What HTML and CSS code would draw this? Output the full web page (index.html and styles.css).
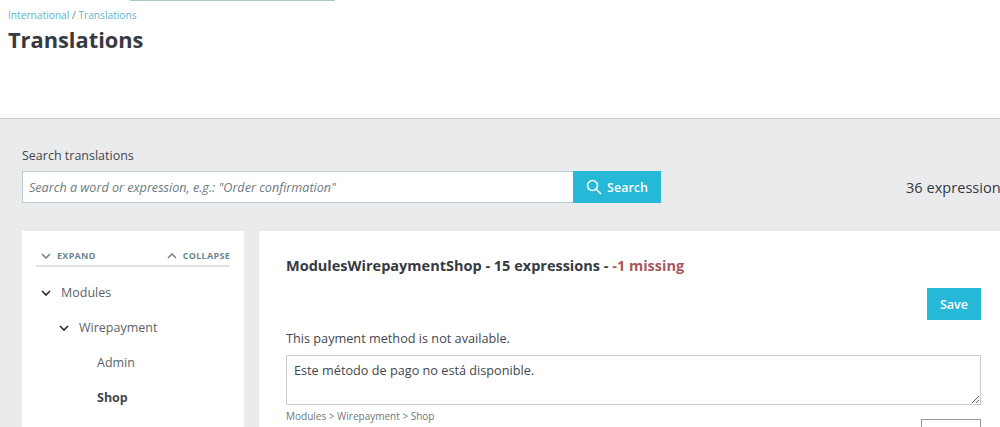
FILE: index.html
```html
<!DOCTYPE html>
<html lang="en">
<head>
    <meta charset="UTF-8">
    <title>Translations</title>
    <link rel="stylesheet" href="styles.css">
</head>
<body>

    <div class="header">
        <div class="top-line"></div>
        <div class="breadcrumb"><a>International</a> / <a>Translations</a></div>
        <h1>Translations</h1>
    </div>

    <div class="content">
        <label class="search-label">Search translations</label>
        <div class="search-row">
            <div class="search-form">
                <input class="search-input" type="text" placeholder='Search a word or expression, e.g.: "Order confirmation"'>
                <button class="search-btn">
                    <svg width="16" height="16" viewBox="0 0 16 16" fill="none" stroke="#fff" stroke-width="1.6">
                        <circle cx="6.5" cy="6.5" r="5"/>
                        <path d="M10.2 10.2 L15 15"/>
                    </svg>
                    Search
                </button>
            </div>
            <div class="total">36 expressions</div>
        </div>

        <div class="columns">
            <div class="tree-card">
                <div class="tree-actions">
                    <span class="tree-action">
                        <svg class="chev" width="10" height="6" viewBox="0 0 10 6" fill="none" stroke="#6c868e" stroke-width="1.5"><path d="M1 1 L5 5 L9 1"/></svg>
                        EXPAND
                    </span>
                    <span class="tree-action">
                        <svg class="chev" width="10" height="6" viewBox="0 0 10 6" fill="none" stroke="#6c868e" stroke-width="1.5"><path d="M1 5 L5 1 L9 5"/></svg>
                        COLLAPSE
                    </span>
                </div>
                <div class="tree-item">
                    <svg class="chev" width="10" height="6" viewBox="0 0 10 6" fill="none" stroke="#25292c" stroke-width="1.6"><path d="M1 1 L5 5 L9 1"/></svg>
                    Modules
                </div>
                <div class="tree-item level-2">
                    <svg class="chev" width="10" height="6" viewBox="0 0 10 6" fill="none" stroke="#25292c" stroke-width="1.6"><path d="M1 1 L5 5 L9 1"/></svg>
                    Wirepayment
                </div>
                <div class="tree-item level-3">Admin</div>
                <div class="tree-item level-3 active">Shop</div>
            </div>

            <div class="main-card">
                <h2>ModulesWirepaymentShop - 15 expressions - <span class="missing">-1 missing</span></h2>
                <div class="save-row"><button class="save-btn">Save</button></div>
                <div class="expression">This payment method is not available.</div>
                <textarea class="translation">Este método de pago no está disponible.</textarea>
                <div class="path-row">
                    <span class="path">Modules &gt; Wirepayment &gt; Shop</span>
                    <button class="reset-btn"></button>
                </div>
            </div>
        </div>
    </div>

</body>
</html>
```

FILE: styles.css
```css
html, body {
    height: 427px;
    overflow: hidden;
}
body {
    font-family: 'Open Sans', sans-serif;
    margin: 0;
    padding: 0;
    background-color: #e9ebed;
    color: #43474d;
}
.header {
    height: 118px;
    background: white;
    border-bottom: 1px solid #c7ced1;
    padding-left: 8px;
}
.top-line {
    width: 205px;
    height: 1px;
    margin-left: 122px;
    background: #a9c9c9;
}
.breadcrumb {
    font-size: 10.2px;
    line-height: 14px;
    margin-top: 7px;
    color: #6c868e;
}
.breadcrumb a {
    color: #5fb3cb;
}
h1 {
    font-size: 21.8px;
    font-weight: 700;
    line-height: 27px;
    margin: 4px 0 0 0;
    color: #363a41;
}
.content {
    padding: 28px 0 0 22px;
}
.search-label {
    display: block;
    font-size: 12.5px;
    line-height: 17px;
    margin-bottom: 7px;
}
.search-row {
    display: flex;
    align-items: center;
    height: 32px;
    overflow: hidden;
}
.search-form {
    display: flex;
    width: 639px;
    flex-shrink: 0;
}
.search-input {
    width: 551px;
    height: 32px;
    box-sizing: border-box;
    padding: 0 6px;
    border: 1px solid #bbcdd2;
    border-right: none;
    background: white;
    font-family: inherit;
    font-size: 12.6px;
}
.search-input::placeholder {
    color: #6c7a80;
    font-style: italic;
    opacity: 1;
}
.search-btn {
    width: 88px;
    height: 32px;
    display: flex;
    align-items: center;
    justify-content: center;
    gap: 5px;
    padding: 0;
    background: #25b9d7;
    border: none;
    color: white;
    font-family: inherit;
    font-size: 12.5px;
    font-weight: 600;
}
.total {
    margin-left: 245px;
    font-size: 14.6px;
    white-space: nowrap;
    color: #363a41;
}
.columns {
    display: flex;
    margin-top: 28px;
    gap: 15px;
}
.tree-card {
    width: 222px;
    height: 196px;
    flex-shrink: 0;
    box-sizing: border-box;
    padding: 18px 14px 0 14px;
    background: white;
    overflow: hidden;
}
.tree-actions {
    display: flex;
    justify-content: space-between;
    padding: 0 0 2px 5px;
    border-bottom: 2px solid #dfe3e5;
    margin-bottom: 8px;
}
.tree-action {
    display: flex;
    align-items: center;
    gap: 6px;
    font-size: 9px;
    line-height: 14px;
    font-weight: 700;
    letter-spacing: 0.3px;
    color: #6c868e;
}
.tree-item {
    display: flex;
    align-items: center;
    gap: 10px;
    height: 35px;
    padding-left: 5px;
    font-size: 12.5px;
    color: #5d6368;
}
.level-2 {
    padding-left: 23px;
}
.level-3 {
    padding-left: 61px;
}
.tree-item.active {
    font-weight: 700;
    color: #43474d;
}
.main-card {
    width: 741px;
    height: 196px;
    flex-shrink: 0;
    box-sizing: border-box;
    padding: 25px 19px 0 27px;
    background: white;
    overflow: hidden;
}
h2 {
    font-size: 14.5px;
    font-weight: 700;
    line-height: 20px;
    margin: 0;
    color: #363a41;
}
.missing {
    color: #a9585d;
}
.save-row {
    display: flex;
    justify-content: flex-end;
    margin-top: 12px;
}
.save-btn {
    width: 54px;
    height: 32px;
    background: #25b9d7;
    border: none;
    color: white;
    font-family: inherit;
    font-size: 12.5px;
    font-weight: 600;
}
.expression {
    font-size: 12.7px;
    line-height: 17px;
    margin-top: 10px;
}
.translation {
    display: block;
    width: 100%;
    height: 50px;
    box-sizing: border-box;
    margin-top: 8px;
    padding: 6px 7px;
    border: 1px solid #c7ced1;
    border-radius: 0;
    font-family: inherit;
    font-size: 12.7px;
    line-height: 17px;
    color: #43474d;
    background: white;
}
.path-row {
    display: flex;
    justify-content: space-between;
    align-items: flex-start;
    margin-top: 4px;
}
.path {
    font-size: 10px;
    line-height: 14px;
    color: #6f7679;
}
.reset-btn {
    width: 60px;
    height: 32px;
    margin-top: 10px;
    background: white;
    border: 1px solid #8f9a9e;
}
```
